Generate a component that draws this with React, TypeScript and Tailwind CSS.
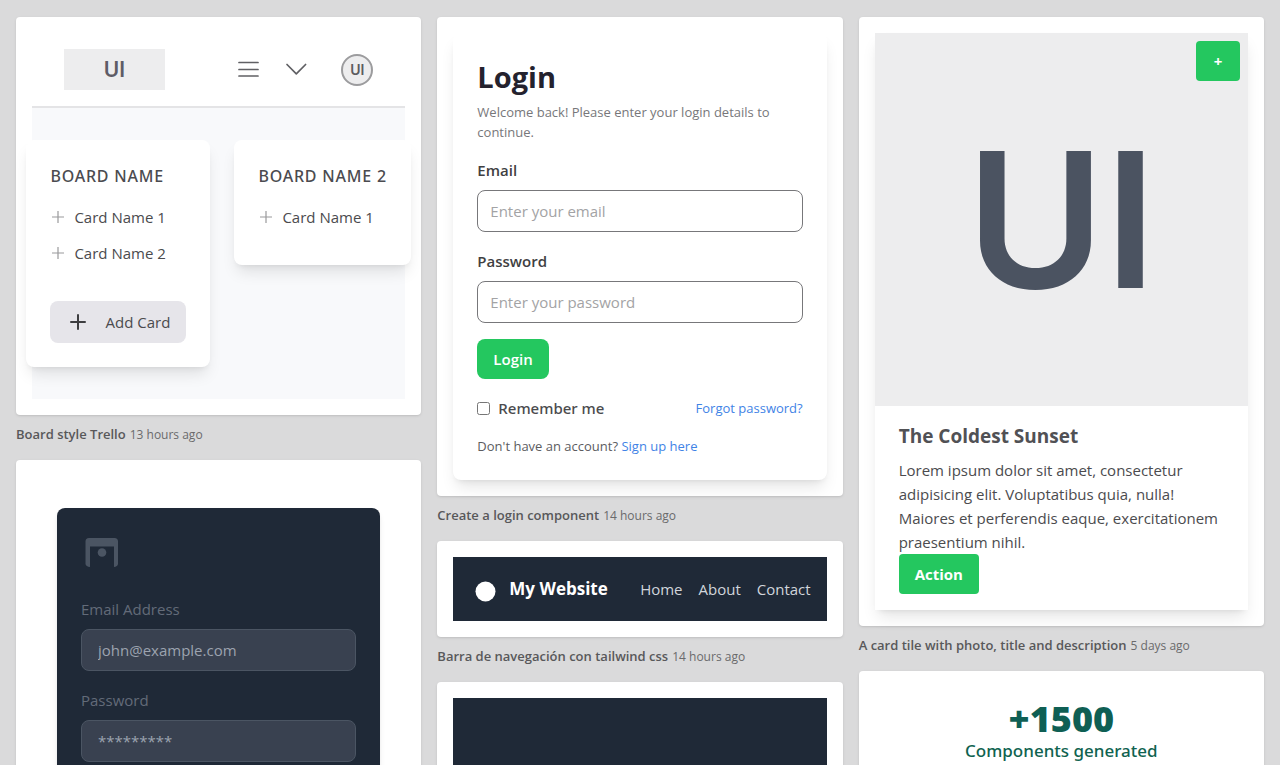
import React from 'react';
import { Plus } from 'lucide-react';

const Tile = ({ title, time, children }: { title?: string; time?: string; children: React.ReactNode }) => (
    <article>
        <div className="rounded bg-white p-4 shadow-sm">{children}</div>
        {title && (
            <p className="flex h-[45px] items-baseline gap-1 pt-[9px] text-xs leading-5 text-[#6a6a6c]">
                <strong className="text-[13px] font-semibold text-[#58585a]">{title}</strong>
                <span>{time}</span>
            </p>
        )}
    </article>
);

const Board = ({ name, cards, children }: { name: string; cards: string[]; children?: React.ReactNode }) => (
    <section className="shrink-0 rounded-lg bg-white p-6 shadow-lg">
        <h2 className="mb-[17px] font-['Noto_Sans',sans-serif] text-base leading-6 font-medium tracking-wider text-[#4b4b50]">{name}</h2>
        <ul className="space-y-3 pb-3">
            {cards.map(card => (
                <li key={card} className="flex items-center gap-2 leading-6">
                    <svg width="16" height="16" viewBox="0 0 16 16" fill="none" stroke="#9a9a9c" strokeWidth="1.2">
                        <path d="M2 8h12M8 2v12" />
                    </svg>
                    {card}
                </li>
            ))}
        </ul>
        {children}
    </section>
);

const TrelloBoard = () => (
    <div>
        <header className="flex items-center border-b-2 border-[#e4e4e6] px-8 py-4 text-[#606064]">
            <div className="mr-auto flex h-[41px] w-[101px] items-center justify-center bg-[#ededee] font-[Inter,sans-serif] text-[21px] font-semibold text-[#5e5c66]">UI</div>
            <button aria-label="Menu" className="mr-6">
                <svg width="24" height="24" viewBox="0 0 24 24" fill="none" stroke="currentColor" strokeWidth="1.7" strokeLinecap="round">
                    <path d="M2 4.500h19M2 11.500h19M2 18h19" />
                </svg>
            </button>
            <button aria-label="Expand" className="mr-8">
                <svg width="24" height="24" viewBox="0 0 24 24" fill="none" stroke="currentColor" strokeWidth="1.7" strokeLinecap="round" strokeLinejoin="round">
                    <path d="M2 6.500 11.300 15.800 20.600 6.500" />
                </svg>
            </button>
            <div className="flex h-8 w-8 items-center justify-center rounded-full border-2 border-[#9c9c9e] bg-[#ededee] font-[Inter,sans-serif] text-[14px] font-semibold text-[#5c5c60]">UI</div>
        </header>
        <div className="flex items-start justify-center gap-6 bg-[#f8f9fb] py-8 text-[#4b4b4e]">
            <Board name="BOARD NAME" cards={['Card Name 1', 'Card Name 2']}>
                <button className="mt-6 flex h-[42px] w-[136px] items-center justify-between rounded-lg bg-[#e6e5ea] px-4">
                    <Plus size={24} strokeWidth={2} className="text-[#3d3d40]" />
                    Add Card
                </button>
            </Board>
            <Board name="BOARD NAME 2" cards={['Card Name 1']} />
        </div>
    </div>
);

const DarkLogin = () => (
    <div className="py-8">
        <form className="mx-[25px] rounded-lg bg-[#1f2937] p-6 shadow-md">
            <svg width="41" height="41" viewBox="0 0 41 41" fill="#4b5563" className="mb-6">
                <path d="M4.500 9.500Q4.500 6 8 6H33.500Q37 6 37 9.500V32Q36.500 34.500 33 35V14.500H9V35Q5 34.500 4.500 32Z" />
                <circle cx="21" cy="20.500" r="4.300" />
            </svg>
            <label htmlFor="dark-email" className="mb-2 block leading-6 text-[#636b79]">Email Address</label>
            <input id="dark-email" type="email" placeholder="john@example.com" className="mb-[17px] h-[42px] w-full rounded-lg border border-[#4b5563] bg-[#394150] px-4 placeholder:text-[#9ca3af]" />
            <label htmlFor="dark-password" className="mb-2 block leading-6 text-[#636b79]">Password</label>
            <input id="dark-password" type="password" placeholder="*********" className="h-[42px] w-full rounded-lg border border-[#4b5563] bg-[#394150] px-4 placeholder:text-[#9ca3af]" />
        </form>
    </div>
);

const LoginForm = () => (
    <form className="rounded-lg bg-white p-6 shadow-lg">
        <h2 className="text-[29px] leading-10 font-bold text-[#24222e]">Login</h2>
        <p className="mt-[5px] mb-4 text-[13px] leading-5 text-[#77777a]">Welcome back! Please enter your login details to continue.</p>
        <label htmlFor="email" className="mb-2 block leading-6 font-semibold text-[#3f3f42]">Email</label>
        <input id="email" type="email" placeholder="Enter your email" className="mb-[17px] h-[42px] w-full rounded-lg border border-[#77777a] px-3 placeholder:text-[#a3a3a5]" />
        <label htmlFor="password" className="mb-2 block leading-6 font-semibold text-[#3f3f42]">Password</label>
        <input id="password" type="password" placeholder="Enter your password" className="mb-4 h-[42px] w-full rounded-lg border border-[#77777a] px-3 placeholder:text-[#a3a3a5]" />
        <button type="button" className="mb-[17px] h-10 rounded-lg bg-[#24c75f] px-4 font-semibold text-white">Login</button>
        <div className="mb-4 flex items-center justify-between">
            <label className="flex items-center gap-2 font-['Noto_Sans',sans-serif] leading-6 font-medium text-[#4b4b4e]">
                <input type="checkbox" className="h-[13px] w-[13px]" />
                Remember me
            </label>
            <a href="#forgot" className="text-[13px] leading-5 text-[#3f83e6]">Forgot password?</a>
        </div>
        <p className="text-[13px] leading-5 text-[#5c5c5f]">
            Don't have an account? <a href="#signup" className="text-[#3f83e6]">Sign up here</a>
        </p>
    </form>
);

const Navbar = () => (
    <nav className="flex h-16 items-center bg-[#1f2937] px-4">
        <svg width="32" height="32" viewBox="0 0 32 32" className="mr-2">
            <circle cx="16.500" cy="18.500" r="10" fill="#fff" />
        </svg>
        <span className="text-[17px] font-bold text-white">My Website</span>
        <div className="ml-auto flex gap-4 text-[#d1d5db]">
            <a href="#home">Home</a>
            <a href="#about">About</a>
            <a href="#contact">Contact</a>
        </div>
    </nav>
);

const PhotoCard = () => (
    <div className="relative bg-white shadow-lg">
        <div className="flex aspect-square items-center justify-center bg-[#ededee] font-[Inter,sans-serif] text-[188px] leading-none font-semibold text-[#4b5361]">UI</div>
        <button aria-label="Add" className="absolute top-2 right-2 h-10 w-11 rounded bg-[#24c75f] font-bold text-white">+</button>
        <div className="px-6 py-4">
            <h2 className="mb-2 text-[19px] leading-7 font-bold text-[#515155]">The Coldest Sunset</h2>
            <p className="leading-6 text-[#4b4b4e]">
                Lorem ipsum dolor sit amet, consectetur adipisicing elit. Voluptatibus quia, nulla! Maiores et perferendis eaque, exercitationem praesentium nihil.
            </p>
            <button className="block h-10 rounded bg-[#24c75f] px-4 font-bold text-white">Action</button>
        </div>
    </div>
);

export default function App() {
    return (
        <main className="h-screen overflow-hidden bg-[#dadadb] px-4 pt-[17px] font-['Open_Sans','Noto_Sans',sans-serif] text-[15px]">
            <div className="grid grid-cols-3 items-start gap-4">
                <div className="min-w-0">
                    <Tile title="Board style Trello" time="13 hours ago"><TrelloBoard /></Tile>
                    <Tile><DarkLogin /></Tile>
                </div>
                <div className="min-w-0">
                    <Tile title="Create a login component" time="14 hours ago"><LoginForm /></Tile>
                    <Tile title="Barra de navegación con tailwind css" time="14 hours ago"><Navbar /></Tile>
                    <Tile><div className="h-64 bg-[#1f2937]" /></Tile>
                </div>
                <div className="min-w-0">
                    <Tile title="A card tile with photo, title and description" time="5 days ago"><PhotoCard /></Tile>
                    <Tile>
                        <div className="py-3 text-center">
                            <p className="text-4xl font-extrabold text-[#0f5f54]">+1500</p>
                            <p className="font-['Noto_Sans',sans-serif] text-[17px] leading-6 font-medium text-[#0f6350]">Components generated</p>
                        </div>
                    </Tile>
                </div>
            </div>
        </main>
    );
}
